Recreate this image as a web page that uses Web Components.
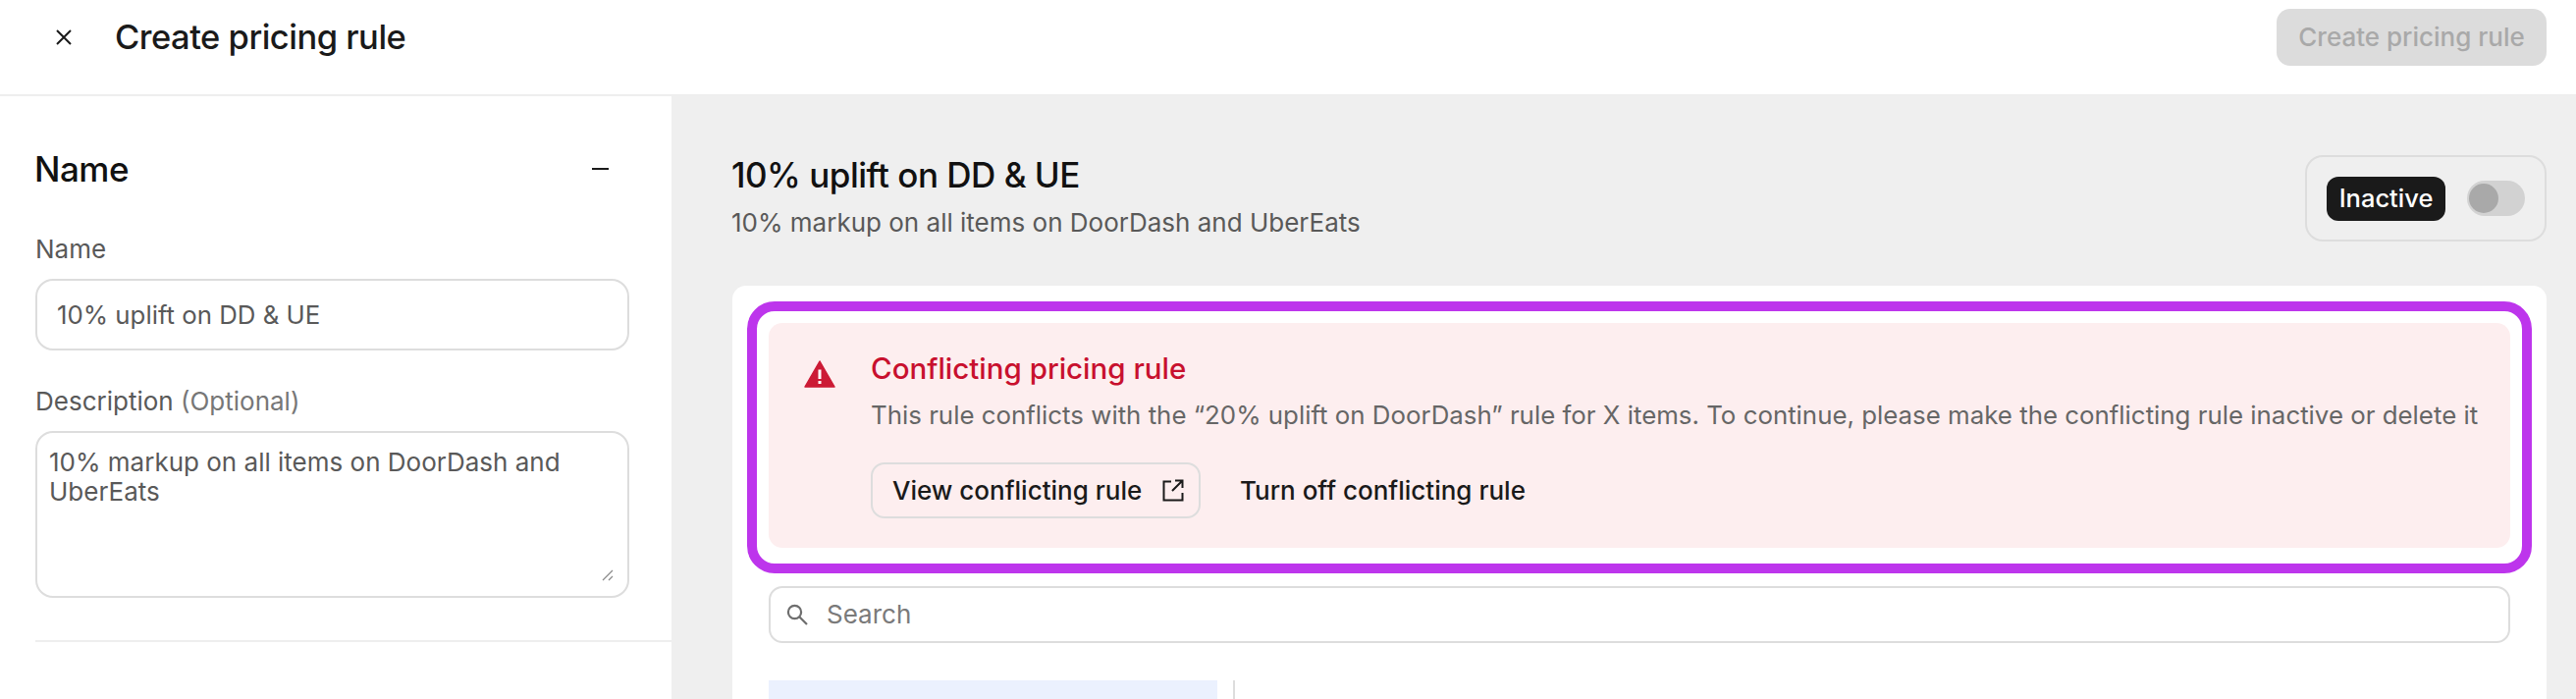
<!DOCTYPE html>
<html>
<head>
<meta charset="utf-8">
<title>Create pricing rule</title>
<style>
  html, body { margin: 0; height: 100%; }
  body { width: 2624px; height: 712px; overflow: hidden; background: #fff; font-family: Inter, "Liberation Sans", sans-serif; }
</style>
</head>
<body>
<pricing-page></pricing-page>

<template id="page-tpl">
  <style>
    :host { display: flex; flex-direction: column; height: 712px; overflow: hidden; }
    .body { display: grid; grid-template-columns: 684px 1fr; flex: 1; min-height: 0; }
    .main { background: #efefef; padding: 60px 30px 0 62px; min-width: 0; }
  </style>
  <page-header></page-header>
  <div class="body">
    <side-panel></side-panel>
    <div class="main">
      <rule-head></rule-head>
      <rule-card></rule-card>
    </div>
  </div>
</template>

<template id="header-tpl">
  <style>
    :host { display: flex; align-items: center; box-sizing: border-box; height: 98px; padding: 0 30px 20px 56px; border-bottom: 2px solid #eee; flex: none; }
    svg { width: 18px; height: 18px; flex: none; }
    h1 { margin: 0 0 0 43px; font: 450 34.5px/40px Inter, sans-serif; letter-spacing: -0.5px; color: #1a1a1a; flex: 1; }
    button { all: unset; display: flex; align-items: center; justify-content: center; width: 275px; height: 58px; background: #dcdcdc; border-radius: 14px; color: #a9a9a9; font: 500 26px/32px Inter, sans-serif; }
  </style>
  <svg viewBox="0 0 18 18" fill="none" stroke="#1a1a1a" stroke-width="2"><path d="M2 2l14 14M16 2L2 16"/></svg>
  <h1>Create pricing rule</h1>
  <button>Create pricing rule</button>
</template>

<template id="side-tpl">
  <style>
    :host { display: block; background: #fff; padding-left: 36px; }
    .title { display: flex; justify-content: space-between; align-items: center; height: 40px; margin-top: 54px; padding-right: 64px; font: 450 35px/40px Inter, sans-serif; letter-spacing: -0.5px; color: #111; }
    .title span:first-child { margin-left: -1px; }
    .minus { width: 17px; height: 2.5px; background: #1a1a1a; }
    form-field { margin-top: 46px; }
    form-field + form-field { margin-top: 36px; }
    hr { height: 2px; border: 0; background: #eee; margin: 43px 0 0; }
    .opt { color: #777; font-weight: 400; }
  </style>
  <div class="title"><span>Name</span><span class="minus"></span></div>
  <form-field>
    <span slot="label">Name</span>
    <text-box>10% uplift on DD &amp; UE</text-box>
  </form-field>
  <form-field>
    <span slot="label">Description <span class="opt">(Optional)</span></span>
    <text-area>10% markup on all items on DoorDash and UberEats</text-area>
  </form-field>
  <hr>
</template>

<template id="field-tpl">
  <style>
    :host { display: block; width: 605px; }
    .label { font: 400 26px/32px Inter, sans-serif; color: #595959; margin-bottom: 14px; display: block; }
  </style>
  <div class="label"><slot name="label"></slot></div>
  <slot></slot>
</template>

<template id="textbox-tpl">
  <style>
    :host { display: flex; align-items: center; box-sizing: border-box; height: 73px; padding: 0 20px; border: 2px solid #ddd; border-radius: 18px; font: 400 25.8px/30px Inter, sans-serif; color: #595959; background: #fff; }
  </style>
  <slot></slot>
</template>

<template id="textarea-tpl">
  <style>
    :host { display: block; position: relative; box-sizing: border-box; height: 170px; padding: 15px 12px; border: 2px solid #ddd; border-radius: 18px; font: 400 26px/30px Inter, sans-serif; color: #595959; background: #fff; }
    svg { position: absolute; right: 14px; bottom: 15px; width: 12px; height: 12px; }
  </style>
  <slot></slot>
  <svg viewBox="0 0 12 12" fill="none" stroke="#8a8a8a" stroke-width="1.2"><path d="M1 11L11 1M7 11l4-4"/></svg>
</template>

<template id="head-tpl">
  <style>
    :host { display: flex; justify-content: space-between; align-items: center; height: 88px; margin-bottom: 45px; }
    .text { padding-bottom: 3px; margin-left: -1px; }
    h2 { margin: 0; font: 450 35px/40px Inter, sans-serif; letter-spacing: -0.5px; color: #111; }
    p { margin: 13px 0 0; font: 400 26px/32px Inter, sans-serif; color: #595959; }
  </style>
  <div class="text">
    <h2>10% uplift on DD &amp; UE</h2>
    <p>10% markup on all items on DoorDash and UberEats</p>
  </div>
  <status-toggle></status-toggle>
</template>

<template id="toggle-tpl">
  <style>
    :host { display: flex; align-items: center; box-sizing: border-box; width: 246px; height: 88px; padding: 0 20px; border: 2px solid #ddd; border-radius: 18px; justify-content: space-between; }
    .badge { display: flex; align-items: center; justify-content: center; width: 121px; height: 45px; border-radius: 12px; background: #1a1a1a; color: #fff; font: 450 25.5px/32px Inter, sans-serif; }
    .track { width: 59px; height: 36px; border-radius: 18px; background: #d2d2d2; display: flex; align-items: center; padding-left: 2px; box-sizing: border-box; }
    .knob { width: 30px; height: 30px; border-radius: 50%; background: #a9a9a9; }
  </style>
  <span class="badge">Inactive</span>
  <span class="track"><span class="knob"></span></span>
</template>

<template id="card-tpl">
  <style>
    :host { display: block; background: #fff; border-radius: 14px 14px 0 0; height: 421px; padding: 16px 15px 0; box-sizing: border-box; }
    .frame { box-sizing: border-box; border: 10px solid #bd35ec; border-radius: 28px; padding: 12px 12px 16px; height: 277px; }
    search-box { margin: 13px 22px 0; }
    .split { display: flex; margin: 38px 22px 0; height: 30px; }
    .cell { width: 457px; background: #ebf1fe; }
    .rule { width: 2px; background: #ddd; margin-left: 16px; }
  </style>
  <div class="frame"><conflict-alert></conflict-alert></div>
  <search-box></search-box>
  <div class="split"><div class="cell"></div><div class="rule"></div></div>
</template>

<template id="alert-tpl">
  <style>
    :host { display: flex; box-sizing: border-box; height: 229px; padding: 29px 32px 0 36px; gap: 36px; background: #fdeeef; border-radius: 14px; }
    svg.warn { width: 32px; height: 28px; margin-top: 9px; flex: none; }
    h3 { margin: 0; font: 450 29.5px/34px Inter, sans-serif; color: #c8102e; }
    p { margin: 15px 0 0; font: 400 25.85px/32px Inter, sans-serif; color: #666; white-space: nowrap; }
    .actions { display: flex; align-items: center; gap: 40px; margin-top: 32px; font: 450 26px/32px Inter, sans-serif; color: #1a1a1a; }
    .btn { display: flex; align-items: center; box-sizing: border-box; width: 336px; height: 57px; padding: 0 0 0 20px; gap: 21px; border: 2px solid #ddd; border-radius: 14px; }
    .btn svg { width: 22px; height: 23px; flex: none; }
  </style>
  <svg class="warn" viewBox="0 0 32 28"><path fill="#cc1a35" stroke="#cc1a35" stroke-width="1.5" stroke-linejoin="round" d="M16 1L31 27H1z"/><rect x="14.5" y="9.5" width="3" height="9.5" fill="#fff"/><rect x="14.5" y="21" width="3" height="3" fill="#fff"/></svg>
  <div>
    <h3>Conflicting pricing rule</h3>
    <p>This rule conflicts with the “20% uplift on DoorDash” rule for X items. To continue, please make the conflicting rule inactive or delete it</p>
    <div class="actions">
      <span class="btn">View conflicting rule
        <svg viewBox="0 0 22 23" fill="none" stroke="#1a1a1a" stroke-width="2"><path d="M9 2.5H1.5v19h19V14M13 1.5h7.5V9M20.5 1.5L10 12"/></svg>
      </span>
      <span>Turn off conflicting rule</span>
    </div>
  </div>
</template>

<template id="search-tpl">
  <style>
    :host { display: flex; align-items: center; box-sizing: border-box; height: 58px; padding-left: 16px; gap: 19px; border: 2px solid #ddd; border-radius: 14px; font: 400 26px/32px Inter, sans-serif; color: #7a7a7a; }
    svg { width: 22px; height: 22px; flex: none; }
  </style>
  <svg viewBox="0 0 22 22" fill="none" stroke="#6e6e6e" stroke-width="2.2"><circle cx="8.5" cy="8.5" r="6.6"/><path d="M13.5 13.5L21 21"/></svg>
  <span>Search</span>
</template>

<script>
  // every element just stamps its template into an open shadow root
  const parts = {
    'pricing-page': 'page-tpl',
    'page-header': 'header-tpl',
    'side-panel': 'side-tpl',
    'form-field': 'field-tpl',
    'text-box': 'textbox-tpl',
    'text-area': 'textarea-tpl',
    'rule-head': 'head-tpl',
    'status-toggle': 'toggle-tpl',
    'rule-card': 'card-tpl',
    'conflict-alert': 'alert-tpl',
    'search-box': 'search-tpl'
  };

  Object.keys(parts).forEach((tag) => {
    customElements.define(tag, class extends HTMLElement {
      constructor() {
        super();
        this.attachShadow({ mode: 'open' });
        const tpl = document.getElementById(parts[tag]);
        this.shadowRoot.appendChild(tpl.content.cloneNode(true));
      }
    });
  });
</script>
</body>
</html>
